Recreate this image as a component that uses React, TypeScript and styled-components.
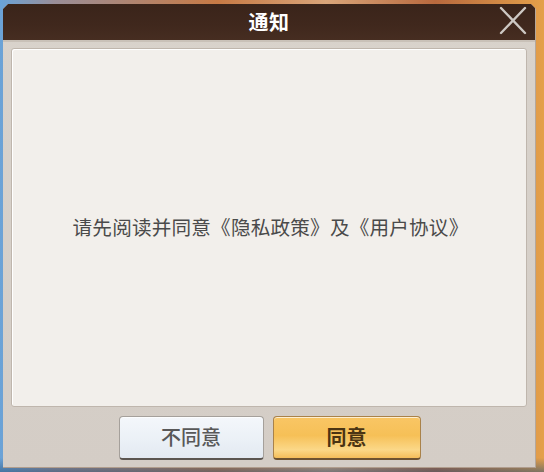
import React from "react"
import styled, { createGlobalStyle } from "styled-components"

const GlobalStyle = createGlobalStyle`
  html, body {
    margin: 0;
    padding: 0;
    width: 544px;
    height: 472px;
    overflow: hidden;
  }
  body {
    font-family: "Noto Sans CJK SC", "Noto Sans", sans-serif;
    background: #c9864e;
  }
`

const Page = styled.div`
  width: 544px;
  height: 472px;
  padding: 4px 8px 4px 3px;
  box-sizing: border-box;
  background:
    linear-gradient(180deg, rgba(0, 0, 0, 0) 0%, rgba(0, 0, 0, 0) 97%, rgba(40, 80, 120, 0.55) 100%),
    linear-gradient(90deg, #6aa3d8 0%, #9a8e98 10%, #c77a45 40%, #d9a57a 60%, #b8693e 80%, #e4a04a 100%);
`

const Dialog = styled.div`
  width: 533px;
  height: 464px;
  display: flex;
  flex-direction: column;
  background: linear-gradient(180deg, #d9d3cc 0%, #d4cdc6 100%);
  border-right: 1px solid #b4a79b;
  border-bottom: 1px solid #b09d8d;
  box-sizing: border-box;
  clip-path: polygon(5px 0, calc(100% - 5px) 0, 100% 5px, 100% 100%, 0 100%, 0 5px);
`

const Header = styled.div`
  position: relative;
  height: 36px;
  flex-shrink: 0;
  display: flex;
  align-items: center;
  justify-content: center;
  background: linear-gradient(180deg, #3a241a 0%, #40281d 60%, #462d21 100%);
  border-bottom: 2px solid #c9c1b8;
`

const Title = styled.h1`
  margin: 0;
  font-size: 20px;
  font-weight: 700;
  color: #ffffff;
  letter-spacing: 0.5px;
  line-height: 1;
`

const CloseButton = styled.button`
  position: absolute;
  top: 2px;
  right: 7px;
  width: 30px;
  height: 29px;
  padding: 0;
  border: none;
  background: none;
  cursor: pointer;
  svg {
    display: block;
  }
`

const Body = styled.div`
  flex: 1;
  display: flex;
  flex-direction: column;
  padding: 6px 8px 0 8px;
`

const Panel = styled.div`
  flex: 1;
  display: flex;
  align-items: center;
  justify-content: center;
  background: #f2efeb;
  border: 1px solid #bfb6ad;
  border-radius: 3px;
  box-shadow: inset 1px 1px 0 #ffffff;
`

const Message = styled.p`
  margin: 0 0 2px 3px;
  font-size: 19.6px;
  letter-spacing: 0.2px;
  color: #4a4a4a;
  line-height: 1;
`

const Footer = styled.div`
  height: 60px;
  flex-shrink: 0;
  display: flex;
  justify-content: center;
  align-items: flex-start;
  gap: 9px;
  padding-top: 9px;
  padding-left: 1px;
  box-sizing: border-box;
`

const Button = styled.button<{ $primary?: boolean }>`
  width: ${(p) => (p.$primary ? "148px" : "145px")};
  height: 44px;
  border-radius: 4px;
  border: 1px solid ${(p) => (p.$primary ? "#a9824a" : "#a5a09b")};
  border-bottom: 2px solid ${(p) => (p.$primary ? "#6d5230" : "#5b5550")};
  font-family: "Noto Sans CJK SC", "Noto Sans", sans-serif;
  font-size: 20px;
  font-weight: ${(p) => (p.$primary ? 700 : 500)};
  color: ${(p) => (p.$primary ? "#4a3413" : "#585858")};
  background: ${(p) =>
    p.$primary
      ? "linear-gradient(180deg, #f9c665 0%, #f6c057 45%, #fbd888 80%, #f4bd5a 100%)"
      : "linear-gradient(180deg, #f4f7fb 0%, #eaf0f6 60%, #e3e9f1 100%)"};
  box-shadow: inset 0 1px 0 rgba(255, 255, 255, 0.7);
  cursor: pointer;
  line-height: 1;
  padding: 0 0 2px 0;
`

const CloseIcon = () => (
  <svg width="30" height="29" viewBox="0 0 30 29">
    <path
      d="M3 2 L27 27 M27 2 L3 27"
      stroke="#cdc8c3"
      strokeWidth="2.4"
      strokeLinecap="round"
      fill="none"
    />
  </svg>
)

const App = () => {
  return (
    <>
      <GlobalStyle />
      <Page>
        <Dialog>
          <Header>
            <Title>通知</Title>
            <CloseButton aria-label="关闭">
              <CloseIcon />
            </CloseButton>
          </Header>
          <Body>
            <Panel>
              <Message>请先阅读并同意《隐私政策》及《用户协议》</Message>
            </Panel>
          </Body>
          <Footer>
            <Button>不同意</Button>
            <Button $primary>同意</Button>
          </Footer>
        </Dialog>
      </Page>
    </>
  )
}

export default App
